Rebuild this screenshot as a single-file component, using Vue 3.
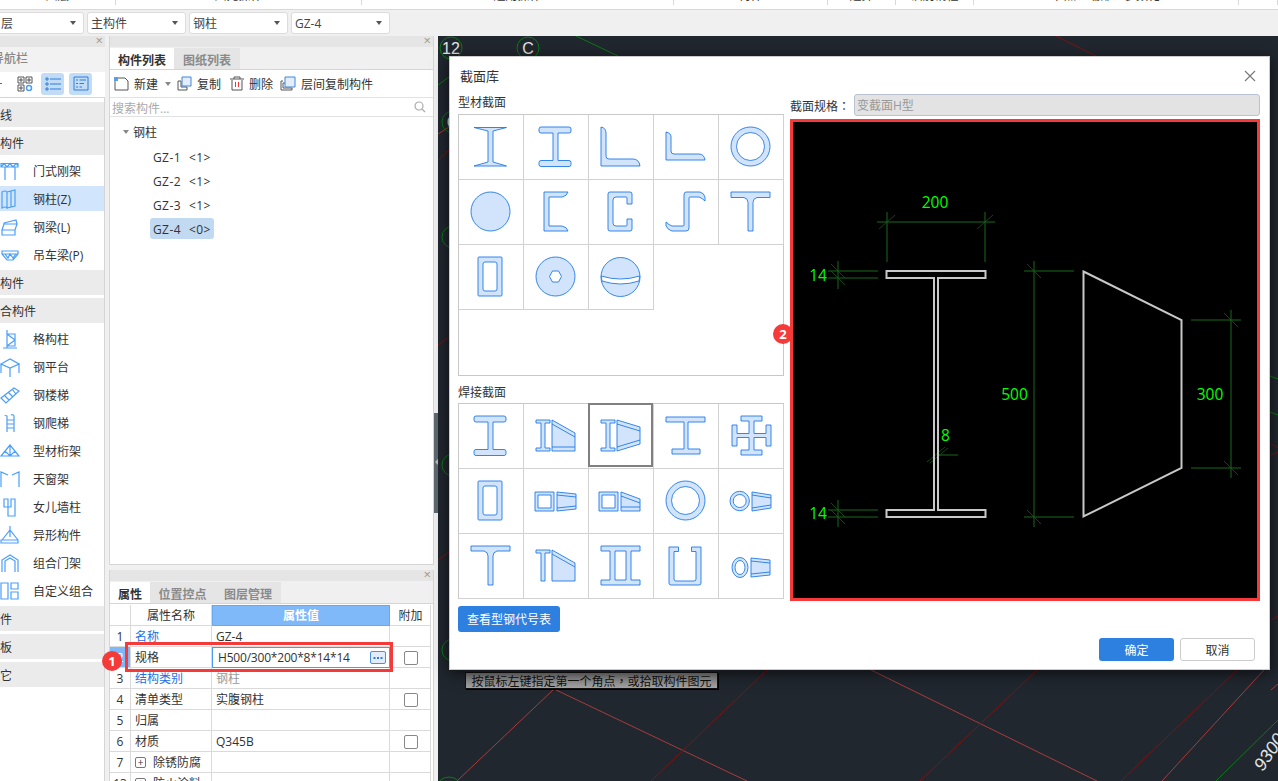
<script setup>
const ribbon = [
  { w: 116, t: '图层' }, { w: 246, t: '图元操作' }, { w: 312, t: '通用操作' }, { w: 154, t: '构件' },
  { w: 68, t: '选择' }, { w: 78, t: '识别钢柱' }, { w: 265, t: '节点、端部、参数化' }, { w: 39, t: '' }
]
const selects = ['层', '主构件', '钢柱', 'GZ-4']
const nav = [
  { s: '线' }, { s: '构件' },
  { t: '门式刚架', d: 'M1 2.5H18V6H1Z M1 6L4 2.5L7 6L10 2.5L13 6L16 2.5L18 5 M5 6V19 M15 6V19' },
  { t: '钢柱(Z)', sel: true, d: 'M2 3Q5 1 7 3V19Q5 17 2 19Z M7 3L15 1V17L7 19 M11 2V18' },
  { t: '钢梁(L)', d: 'M4 6L16 3L17 7H4Z M4 7L2 13H15L17 7 M2 13V18H15V13' },
  { t: '吊车梁(P)', d: 'M2 6H18V9L13 15H7L2 9Z M2 9H18 M5 9L8 13L10 9L13 13L16 9' },
  { s: '构件' }, { s: '合构件' },
  { t: '格构柱', d: 'M7 1V19 M3 19H17 M7 5H15V17H7 M7 5L15 11L7 17' },
  { t: '钢平台', d: 'M1 7L10 2L19 7L10 11Z M1 7V16 M19 7V16 M10 11V20' },
  { t: '钢楼梯', d: 'M1 13L14 3L19 6L6 18L1 13Z M4 10L9 15 M8 7L13 12 M12 4L16 9' },
  { t: '钢爬梯', d: 'M5 3Q5 2 7 3V19 M11 2Q13 1 14 3V19 M7 7H14 M7 11H14 M7 15H14' },
  { t: '型材桁架', d: 'M1 15L10 4L19 15Z M10 4V15 M5 10L10 15L15 10' },
  { t: '天窗架', d: 'M1 18V3L8 6 M19 18V3L12 6' },
  { t: '女儿墙柱', d: 'M4 2H8V10H11V2H15V19H8V10H4Z' },
  { t: '异形构件', d: 'M10 1V12 M1 18H18V15H1Z M2 15L10 5L18 15' },
  { t: '组合门架', d: 'M2 19V7L10 2L18 7V19 M5 19V8L10 5L15 8V19' },
  { t: '自定义组合', d: 'M1 2H8V18H1Z M11 2H18V8H11Z M11 11H18V18H11Z' },
  { s: '件' }, { s: '板' }, { s: '它' }
]
const tree = [
  { t: 'GZ-1', n: '<1>' }, { t: 'GZ-2', n: '<1>' }, { t: 'GZ-3', n: '<1>' }, { t: 'GZ-4', n: '<0>', sel: true }
]
const rows = [
  { n: '1', name: '名称', blue: true, val: 'GZ-4' },
  { n: '2', name: '规格', val: 'H500/300*200*8*14*14', cur: true, chk: true },
  { n: '3', name: '结构类别', blue: true, val: '钢柱', grey: true },
  { n: '4', name: '清单类型', val: '实腹钢柱', chk: true },
  { n: '5', name: '归属', val: '' },
  { n: '6', name: '材质', val: 'Q345B', chk: true },
  { n: '7', name: '除锈防腐', val: '', plus: true },
  { n: '13', name: '防火涂料', val: '', plus: true }
]
const HB = 'M18 13H46q2 0 2 2v2q0 2-2 2H35V46.5H46q2 0 2 2v2q0 2-2 2H18q-2 0-2-2v-2q0-2 2-2H30V19H18q-2 0-2-2v-2q0-2 2-2Z'
const TUBE = 'M21 13H43q1 0 1 1V51q0 1-1 1H21q-1 0-1-1V14q0-1 1-1Z M27 18H37q2 0 2 2V45q0 2-2 2H27q-2 0-2-2V20q0-2 2-2Z'
const ring = (cx, cy, r, ri) => `M${cx - r} ${cy}a${r} ${r} 0 1 0 ${2 * r} 0a${r} ${r} 0 1 0 ${-2 * r} 0Z M${cx - ri} ${cy}a${ri} ${ri} 0 1 0 ${2 * ri} 0a${ri} ${ri} 0 1 0 ${-2 * ri} 0Z`
const smallI = 'M13 17H27V20H22V45H27V48H13V45H18V20H13Z'
const shapes = [
  ['M16 13.5H48.5L35 17V48L48.5 52H16L30 48V17Z'],
  [HB],
  ['M13 13q5 1 5 6V42q0 3 3 3H45q6 0 7 7H13Z'],
  ['M13 18q5 1 5 5V37q0 3 3 3H46q5 0 6 6H13Z'],
  [ring(32.5, 32.5, 19.5, 14)],
  [ring(32.5, 32.5, 19.5, 0)],
  ['M21 13H45q-1 4-6 5H26V47H39q5 1 6 5H21Z'],
  ['M22 13H42q2 0 2 2V25H39V19q0-1-1-1H28q-3 0-3 3V44q0 3 3 3H38q1 0 1-1V40H44V50q0 2-2 2H22q-2 0-2-2V15q0-2 2-2Z'],
  ['M33 13H47q4 1 5 5v4q-3-3-6-4H37q-1 0-1 1V49q0 3-3 3H19q-4-1-6-5V43q3 3 6 4H30q1 0 1-1V16q0-3 2-3Z'],
  ['M13 13H52V18.5H39q-4 1-4 5V52H30V23.5q0-4-4-5H13Z'],
  [TUBE],
  [ring(32.5, 32.5, 19.5, 0), 'M26.5 32.5L29.5 27H35.5L38.5 32.5L35.5 38H29.5Z#w'],
  [ring(32.5, 33, 19.5, 0), 'M13.2 32Q32.5 38 51.8 32L51 37Q32.5 43 14 37Z#w']
]
const welded = [
  [HB],
  [smallI, 'M29 17L52 30V48H29Z', 'M29 21L52 34 M29 44H52#l'],
  [smallI, 'M29 17L52 24V41L29 48Z', 'M29 21L52 28 M29 44L52 37#l'],
  ['M13 14H52V19H35V46H47V51H19V46H31V19H13Z'],
  ['M23 13H44V18H36V30.5H48V22H53V43H48V34.5H36V47H44V52H23V47H31V34.5H19V43H14V22H19V30.5H31V18H23Z'],
  [TUBE],
  ['M12 24H31V43H12Z M15 27V40H28V27Z', 'M34 24L53 26V41L34 43Z', 'M34 27L53 29 M34 40L53 38#l'],
  ['M11 24H30V43H11Z M14 27V40H27V27Z', 'M33 24L52 31V43H33Z', 'M33 28L52 35 M33 39H52#l'],
  [ring(32.5, 32.5, 19.5, 14)],
  [ring(21.7, 33, 9.7, 6.5), 'M34 24L53 27V40L34 43Z', 'M34 27L53 30 M34 40L53 37#l'],
  ['M13 13H52V18H39q-4 1-4 5V52H30V23q0-4-4-5H13Z'],
  ['M13 17H27V20H22V48H18V20H13Z', 'M29 17L52 30V48H29Z', 'M29 21L52 34#l'],
  ['M13 13H52V18H43V47H52V52H13V47H22V18H13Z M27 18V47H38V18Z'],
  ['M16 14H25.5V18.5H21V46q0 2 2 2H41q2 0 2-2V18.5H38.5V14H48V50q0 2-2 2H18q-2 0-2-2Z'],
  ['M14 34.5a8 10 0 1 0 16 0a8 10 0 1 0-16 0Z M17 34.5a5 7 0 1 0 10 0a5 7 0 1 0-10 0Z', 'M33 25L52 27V42L33 44Z', 'M33 28L52 30 M33 41L52 39#l']
]
const parts = (d) => {
  if (d.endsWith('#w')) return { d: d.slice(0, -2), cls: 'w' }
  if (d.endsWith('#l')) return { d: d.slice(0, -2), cls: 'l' }
  return { d, cls: 'f' }
}
const circles = [
  { x: 451, y: 48, t: '12' }, { x: 528, y: 48, t: 'C' }, { x: 453, y: 122, t: 'G' },
  { x: 453, y: 237, t: '1' }, { x: 453, y: 465, t: '1' }, { x: 453, y: 650, t: '9' }
]
const redLines = [
  [554, 689, 457, 781, 'a'], [554, 689, 747, 781, 'a'], [767, 670, 651, 781, 'b'], [871, 670, 1097, 781, 'a'],
  [1037, 670, 920, 781, 'b'], [1237, 670, 1121, 781, 'b'], [1264, 670, 1162, 781, 'a'],
  [1056, 36, 1096, 56, 'b'], [438, 160, 449, 150, 'b'], [438, 345, 449, 337, 'b'], [438, 560, 449, 552, 'b'],
  [438, 134, 449, 127, 'a'], [1271, 444, 1278, 448, 'b'], [1271, 455, 1278, 452, 'b'], [1271, 620, 1278, 616, 'b'], [1271, 690, 1278, 684, 'a']
]
const greenLines = [
  [576, 36, 618, 56], [1278, 720, 1216, 781], [438, 85, 449, 77], [1270, 376, 1278, 379], [1270, 412, 1278, 415]
]
const dimLines = 'M877 222H995 M887 212V262 M985 212V262 M828 271H878 M828 278H878 M838 261V289 M828 510H878 M828 517H878 M838 500V527 M1024 271H1074 M1024 517H1074 M1034 261V527 M1191 320H1241 M1191 468H1241 M1231 310V478 M938 455H958 M934 445V462 M938 445V462'
const dimTicks = 'M879 229L895 215 M977 229L993 215 M831 264L845 278 M831 271L845 285 M831 503L845 517 M831 510L845 524 M1027 264L1041 278 M1027 510L1041 524 M1224 313L1238 327 M1224 461L1238 475 M927 462L945 447 M930 463L948 448'
</script>

<template>
  <div class="app">
    <div class="ribbon">
      <div v-for="(g, i) in ribbon" :key="i" class="rib-group" :style="{ width: g.w + 'px' }"><span>{{ g.t }}</span></div>
    </div>

    <div class="selbar">
      <div v-for="(s, i) in selects" :key="i" class="sel" :class="{ first: i === 0 }">
        <span>{{ s }}</span><i class="caret"></i>
      </div>
    </div>

    <div class="main">
      <aside class="navp">
        <div class="phead"><span class="x">×</span></div>
        <div class="navtitle"><span>导航栏</span></div>
        <div class="navicons">
          <i class="dash"></i>
          <svg class="gridico" width="16" height="16" viewBox="0 0 16 16">
            <path d="M1 1H7V7H1Z M9 1H15V7H9Z M1 9H7V15H1Z M3 3H5V5H3Z M11 3H13V5H11Z M3 11H5V13H3Z" fill="none" stroke="#555" />
            <circle cx="12" cy="12" r="2.5" fill="none" stroke="#4a9efb" stroke-width="1.5" />
          </svg>
          <span class="vbtn">
            <svg width="16" height="14" viewBox="0 0 16 14"><path d="M5 2H16 M5 7H16 M5 12H16" stroke="#2f7fd8" /><path d="M1 1H3V3H1Z M1 6H3V8H1Z M1 11H3V13H1Z" fill="none" stroke="#2f7fd8" /></svg>
          </span>
          <span class="vbtn">
            <svg width="16" height="15" viewBox="0 0 16 15"><path d="M1 1H15V14H1Z" fill="none" stroke="#2f7fd8" /><path d="M3 4H5 M6.500 4H13 M3 7.500H5 M6.500 7.500H11 M3 11H5 M6.500 11H9" stroke="#2f7fd8" /></svg>
          </span>
        </div>
        <div class="navlist">
          <template v-for="(n, i) in nav" :key="i">
            <div v-if="n.s" class="sec">{{ n.s }}</div>
            <div v-else class="item" :class="{ on: n.sel }">
              <svg width="20" height="20" viewBox="0 0 20 20"><path :d="n.d" fill="none" stroke="#4a9efb" stroke-width="1.2" /></svg>
              <span>{{ n.t }}</span>
            </div>
          </template>
        </div>
      </aside>

      <div class="midcol">
        <section class="listp">
          <div class="phead"><span class="x">×</span></div>
          <div class="tabs">
            <span class="tab on w64">构件列表</span><span class="tab w66">图纸列表</span>
          </div>
          <div class="tools">
            <svg width="15" height="14" viewBox="0 0 15 14"><path d="M1 4V13H14V4L11 1H4" fill="none" stroke="#555" /><path d="M0 0H4V4H0Z" fill="#5a9de8" /></svg>
            <span class="t1">新建</span><i class="caret small"></i>
            <svg class="ml6" width="15" height="15" viewBox="0 0 15 15"><path d="M1 5H4V11H10V14H1Z" fill="none" stroke="#555" /><path d="M5 1H14V10H5Z" fill="#e4eefb" stroke="#3f86dc" /></svg>
            <span class="t2">复制</span>
            <svg class="ml9" width="14" height="15" viewBox="0 0 14 15"><path d="M2 4V14H12V4 M0 3H14 M4 3V1H10V3" fill="none" stroke="#555" /><path d="M5.500 6V11 M8.500 6V11" stroke="#e33" /></svg>
            <span class="t2">删除</span>
            <svg class="ml7" width="16" height="15" viewBox="0 0 16 15"><path d="M3 5H1V14H12V12 M5 7H3V12H12" fill="none" stroke="#555" /><path d="M5 1H15V11H5Z" fill="#e4eefb" stroke="#3f86dc" /></svg>
            <span class="t2">层间复制构件</span>
          </div>
          <div class="search">
            <span>搜索构件...</span>
            <svg width="12" height="12" viewBox="0 0 12 12"><circle cx="5" cy="5" r="4" fill="none" stroke="#aaa" stroke-width="1.200" /><path d="M8 8L11 11" stroke="#aaa" stroke-width="1.200" /></svg>
          </div>
          <div class="tree">
            <div class="troot"><i class="caret small"></i><span>钢柱</span></div>
            <div v-for="t in tree" :key="t.t" class="tnode" :class="{ on: t.sel }"><span>{{ t.t }}</span><span>{{ t.n }}</span></div>
          </div>
        </section>

        <section class="propp">
          <div class="phead"><span class="x">×</span></div>
          <div class="tabs">
            <span class="tab on w40">属性</span><span class="tab w65">位置控点</span><span class="tab w66">图层管理</span>
          </div>
          <div class="ptable">
            <div class="prow head">
              <div class="c num"></div><div class="c name center">属性名称</div>
              <div class="c val hv">属性值</div><div class="c ext">附加</div>
            </div>
            <div v-for="r in rows" :key="r.n" class="prow">
              <div class="c num" :class="{ cur: r.cur }">{{ r.n }}</div>
              <div class="c name" :class="{ blue: r.blue }">
                <span v-if="r.plus" class="plus">+</span>{{ r.name }}
              </div>
              <div class="c val" :class="{ grey: r.grey, edit: r.cur }">
                <span>{{ r.val }}</span>
                <span v-if="r.cur" class="dots">
                  <svg width="14" height="11" viewBox="0 0 14 11"><path d="M2.500 5H4.500V7H2.500Z M6 5H8V7H6Z M9.500 5H11.500V7H9.500Z" fill="#2f7fd8" /></svg>
                </span>
              </div>
              <div class="c ext"><i v-if="r.chk" class="chk"></i></div>
            </div>
          </div>
        </section>
      </div>

      <div class="splitter"><div class="handle"><i></i></div></div>

      <div class="canvas">
        <svg width="840" height="745" viewBox="438 36 840 745">
          <line v-for="(l, i) in redLines" :key="'r' + i" :x1="l[0]" :y1="l[1]" :x2="l[2]" :y2="l[3]" :stroke="l[4] === 'a' ? '#a83c3c' : '#7c1414'" />
          <line v-for="(l, i) in greenLines" :key="'g' + i" :x1="l[0]" :y1="l[1]" :x2="l[2]" :y2="l[3]" stroke="#0c7a14" />
          <g v-for="c in circles" :key="c.t + c.y">
            <circle :cx="c.x" :cy="c.y" r="11" fill="none" stroke="#0c7a14" />
            <text :x="c.x" :y="c.y + 6" text-anchor="middle" class="cadt">{{ c.t }}</text>
          </g>
          <circle cx="449" cy="790" r="13" fill="none" stroke="#0c7a14" />
          <text x="1263" y="772" class="cadt big" transform="rotate(-56 1263 772)">9300</text>
        </svg>
      </div>
    </div>

    <div class="tooltip">按鼠标左键指定第一个角点<span class="tc">，</span>或拾取构件图元</div>

    <div class="redbox"></div>
    <div class="badge b1">1</div>

    <div class="dialog">
      <div class="dlg-title"><span>截面库</span>
        <svg width="12" height="12" viewBox="0 0 12 12"><path d="M1 1L11 11M11 1L1 11" stroke="#777" stroke-width="1.100" /></svg>
      </div>
      <div class="dlg-body">
        <div class="dlg-left">
          <div class="lbl">型材截面</div>
          <div class="grid g1">
            <div v-for="(s, i) in shapes" :key="i" class="cell">
              <svg width="64" height="64" viewBox="1 1 64 64">
                <path v-for="(p, j) in s.map(parts)" :key="j" :d="p.d" :class="p.cls" fill-rule="evenodd" />
              </svg>
            </div>
          </div>
          <div class="lbl l2">焊接截面</div>
          <div class="grid g2">
            <div v-for="(s, i) in welded" :key="i" class="cell" :class="{ picked: i === 2 }">
              <svg width="64" height="64" viewBox="1 1 64 64">
                <path v-for="(p, j) in s.map(parts)" :key="j" :d="p.d" :class="p.cls" fill-rule="evenodd" />
              </svg>
            </div>
          </div>
          <button class="btn primary code">查看型钢代号表</button>
        </div>
        <div class="dlg-right">
          <div class="spec"><span class="spec-l">截面规格：</span><div class="spec-v">变截面H型</div></div>
          <div class="cad">
            <svg width="464" height="476" viewBox="793 122 464 476">
              <path :d="dimLines" fill="none" stroke="#1b6a1b" />
              <path :d="dimTicks" fill="none" stroke="#17581a" stroke-width=".8" />
              <path d="M886.500 271H985.500V278H938V510H985.500V517H886.500V510H934V278H886.500Z M1083.500 271.500L1181.500 320V468L1083.500 516.500Z" fill="none" stroke="#c8c8c8" stroke-width="2" />
              <text x="935" y="208" class="dimt" text-anchor="middle">200</text>
              <text x="818" y="281" class="dimt" text-anchor="middle">14</text>
              <text x="818" y="519" class="dimt" text-anchor="middle">14</text>
              <text x="1014.500" y="400" class="dimt" text-anchor="middle">500</text>
              <text x="1210" y="400" class="dimt" text-anchor="middle">300</text>
              <text x="945.500" y="441" class="dimt" text-anchor="middle">8</text>
            </svg>
          </div>
        </div>
      </div>
      <div class="dlg-foot">
        <button class="btn primary ok">确定</button>
        <button class="btn cancel">取消</button>
      </div>
      <div class="badge b2">2</div>
    </div>
  </div>
</template>

<style>
html, body { margin: 0; overflow: hidden; background: #f0f0f0; }
</style>

<style scoped>
.app { position: relative; width: 1278px; height: 781px; overflow: hidden; display: flex; flex-direction: column; background: #f0f0f0; font: 12px/1.3 "Open Sans", "Noto Sans CJK SC", sans-serif; color: #333; }
.ribbon { display: flex; height: 5px; padding-bottom: 4px; background: #fff; border-bottom: 1px solid #d8d8d8; }
.rib-group { box-sizing: border-box; height: 5px; overflow: hidden; border-right: 1px solid #d8d8d8; text-align: center; }
.rib-group span { display: block; margin-top: -13px; line-height: 17px; }
.selbar { display: flex; gap: 3px; height: 26px; align-items: center; margin-left: -15px; }
.sel { box-sizing: border-box; width: 99px; height: 22px; background: #fff; border: 1px solid #dcdcdc; border-radius: 3px; display: flex; align-items: center; justify-content: space-between; padding: 0 7px 0 3px; font-size: 12px; color: #444; }
.sel span { margin-top: 2px; }
.sel.first { padding-left: 15px; }
.caret { width: 0; height: 0; border: 3px solid transparent; border-top: 4px solid #555; border-bottom: 0; }
.caret.small { border-top-color: #888; }

.main { flex: 1; display: flex; min-height: 0; }
.phead { height: 11px; background: #e5e5e5; position: relative; }
.x { position: absolute; right: 2px; top: -3px; font-size: 13px; line-height: 14px; color: #999; }

.navp { width: 105px; flex: none; margin-right: 4px; display: flex; flex-direction: column; }
.navtitle { height: 25px; background: #f2f2f2; line-height: 23px; color: #888; font-weight: 500; overflow: hidden; }
.navtitle span { margin-left: -8px; display: block; }
.navicons { height: 25px; background: #fff; display: flex; align-items: center; padding-bottom: 2px; box-sizing: border-box; }
.dash { width: 2px; height: 1px; background: #666; margin-right: 15px; }
.gridico { margin-right: 8px; }
.vbtn { width: 23px; height: 22px; margin-right: 5px; border-radius: 3px; background: #c3dcf6; display: flex; align-items: center; justify-content: center; }
.navlist { flex: 1; background: #fff; border-top: 1px solid #d5d5d5; border-right: 1px solid #d5d5d5; padding-top: 4px; display: flex; flex-direction: column; gap: 3px; }
.sec { height: 25px; flex: none; background: #ebebeb; line-height: 27px; }
.item { height: 25px; flex: none; display: flex; align-items: center; }
.item span { margin-top: 2px; }
.item svg { width: 20px; flex: none; margin-right: 13px; }
.item.on { background: #d1e6fd; }

.midcol { width: 325px; flex: none; display: flex; flex-direction: column; gap: 5px; }
.listp { height: 529px; box-sizing: border-box; background: #fff; border: 1px solid #d5d5d5; border-top: 0; display: flex; flex-direction: column; }
.propp { flex: 1; min-height: 0; background: #fff; border-left: 1px solid #d5d5d5; border-right: 1px solid #d5d5d5; overflow: hidden; }
.tabs { height: 23px; box-sizing: border-box; background: #f0f0f0; display: flex; border-bottom: 1px solid #d5d5d5; padding-top: 1px; }
.tab { text-align: center; line-height: 25px; font-weight: 700; background: #e5e5e5; color: #8a8a8a; font-size: 12px; }
.tab.on { background: #fff; color: #333; }
.w64 { width: 64px; } .w66 { width: 66px; } .w40 { width: 40px; } .w65 { width: 65px; }
.tools { height: 28px; flex: none; box-sizing: border-box; display: flex; align-items: center; padding-left: 4px; border-bottom: 1px solid #e2e2e2; }
.t1 { margin: 3px 7px 0 5px; }
.t2 { margin: 3px 0 0 5px; }
.ml6 { margin-left: 6px; } .ml9 { margin-left: 9px; } .ml7 { margin-left: 7px; }
.search { height: 18px; flex: none; display: flex; align-items: center; justify-content: space-between; padding: 0 7px 0 2px; color: #aaa; border-bottom: 1px solid #e2e2e2; }
.search span { margin-top: 3px; }
.tree { padding-top: 3px; }
.troot { height: 23px; display: flex; align-items: center; padding-left: 13px; gap: 4px; }
.troot span { margin-top: 2px; }
.tnode { display: flex; gap: 8px; width: 64px; height: 21px; margin: 3px 0 0 40px; padding-left: 3px; box-sizing: border-box; align-items: center; border-radius: 3px; white-space: nowrap; letter-spacing: .4px; }
.tnode span { margin-top: 2px; }
.tnode.on { background: #c2d9f2; }

.ptable { margin-top: 1px; padding-right: 1px; }
.prow { display: grid; grid-template-columns: 21px 81px 178px 41px; height: 21px; }
.prow.head { height: 21px; }
.c { box-sizing: border-box; border-right: 1px solid #dadada; border-bottom: 1px solid #dadada; display: flex; align-items: center; padding: 1px 0 0 4px; white-space: nowrap; overflow: hidden; }
.num { justify-content: center; padding: 1px 0 0; font-size: 12px; }
.num.cur { background: #7fb8f8; color: #fff; }
.name.center { justify-content: center; padding: 1px 0 0; }
.name.blue { color: #1d6fe6; }
.val { position: relative; }
.val.grey { color: #999; }
.hv { background: #80b9fa; color: #fff; justify-content: center; font-weight: 700; padding: 1px 0 0; border: 1px solid #6aa8ee; }
.ext { justify-content: center; padding: 1px 0 0 1px; }
.edit { border: 1px solid #4a9af0; padding-left: 5px; letter-spacing: -.2px; }
.dots { position: absolute; right: 3px; top: 3px; width: 16px; height: 13px; box-sizing: border-box; background: #e2ecfa; border: 1px solid #4a90e2; border-radius: 2px; display: flex; align-items: center; justify-content: center; }
.chk { display: block; width: 14px; height: 14px; box-sizing: border-box; border: 1px solid #888; border-radius: 2px; background: #fff; }
.plus { width: 11px; height: 11px; box-sizing: border-box; border: 1px solid #777; border-radius: 2px; margin-right: 7px; font-size: 10px; line-height: 9px; text-align: center; color: #333; }

.splitter { width: 4px; flex: none; background: #f0f0f0; position: relative; }
.handle { position: absolute; left: 0; top: 377px; width: 4px; height: 100px; background: #5f6870; }
.handle i { position: absolute; left: 1px; top: 46px; width: 0; height: 0; border: 3px solid transparent; border-right-color: #b8bdc2; border-left: 0; }
.canvas { flex: 1; background: #21272f; overflow: hidden; }
.canvas svg { display: block; }
.cadt { fill: #e4e4e4; font: 16px "Liberation Sans", sans-serif; }
.cadt.big { font-size: 18px; font-style: italic; }

.tooltip { position: absolute; left: 465px; top: 672px; width: 253px; height: 17px; box-sizing: border-box; background: linear-gradient(#7d7d7d, #a3a3a3); border: 1px solid #111; box-shadow: 1px 1px 0 #000; color: #111; text-align: center; line-height: 15px; font-size: 12px; white-space: nowrap; }
.tc { font-family: "Noto Sans CJK TC", sans-serif; }
.redbox { position: absolute; left: 125px; top: 642px; width: 268px; height: 30px; box-sizing: border-box; border: 3px solid #f53a3a; }
.badge { position: absolute; width: 20px; height: 20px; border-radius: 50%; background: #f53a3a; color: #fff; font-weight: 700; font-size: 13px; line-height: 20px; text-align: center; }
.b1 { left: 102px; top: 651px; }
.b2 { left: 323px; top: 267px; }

.dialog { position: absolute; left: 449px; top: 56px; width: 821px; height: 614px; box-sizing: border-box; background: #fff; border: 1px solid #ccc; box-shadow: 0 3px 14px rgba(0, 0, 0, .65); padding: 0 10px 0 8px; }
.dlg-title { height: 37px; display: flex; align-items: center; justify-content: space-between; padding: 0 3px 0 2px; font-size: 13px; color: #333; }
.dlg-title span { margin-top: 2px; }
.dlg-body { display: flex; gap: 6px; }
.dlg-left { width: 326px; flex: none; }
.dlg-right { width: 470px; flex: none; }
.lbl { height: 20px; line-height: 17px; }
.lbl.l2 { height: 27px; line-height: 34px; }
.grid { box-sizing: border-box; width: 326px; border: 1px solid #c8c8c8; display: grid; grid-template-columns: repeat(5, 65px); grid-auto-rows: 65px; }
.g1 { height: 262px; }
.g2 { height: 196px; }
.cell { box-sizing: border-box; border-right: 1px solid #d2d2d2; border-bottom: 1px solid #d2d2d2; position: relative; }
.cell svg { display: block; }
.picked::after { content: ""; position: absolute; left: -1px; top: -1px; width: 65px; height: 64px; box-sizing: border-box; border: 2px solid #808080; }
.f { fill: #d2e4fb; stroke: #2079e8; stroke-width: .9; }
.w { fill: #fff; stroke: #2079e8; stroke-width: .9; }
.l { fill: none; stroke: #2079e8; stroke-width: .9; }
.btn { border: 0; border-radius: 3px; font: inherit; font-size: 12px; padding: 2px 0 0; }
.primary { background: #2e80e0; color: #fff; }
.code { display: block; width: 102px; height: 26px; margin-top: 7px; }
.spec { display: flex; height: 22px; align-items: center; margin-bottom: 3px; }
.spec-l { width: 64px; flex: none; margin-top: 2px; font-family: "Noto Sans CJK TC", sans-serif; }
.spec-v { flex: 1; height: 22px; box-sizing: border-box; background: #e3e3e3; border: 1px solid #b8c2d2; border-radius: 3px; color: #999; padding-left: 2px; line-height: 22px; }
.cad { width: 470px; height: 482px; box-sizing: border-box; background: #000; border: 3px solid #f53a3a; }
.cad svg { display: block; }
.dimt { fill: #00ff00; font: 15.500px "Open Sans", sans-serif; }
.dlg-foot { display: flex; justify-content: flex-end; gap: 6px; margin-top: 6px; padding-right: 4px; }
.ok { width: 75px; height: 23px; }
.cancel { width: 75px; height: 23px; box-sizing: border-box; background: #fff; border: 1px solid #ccc; color: #333; }
</style>
